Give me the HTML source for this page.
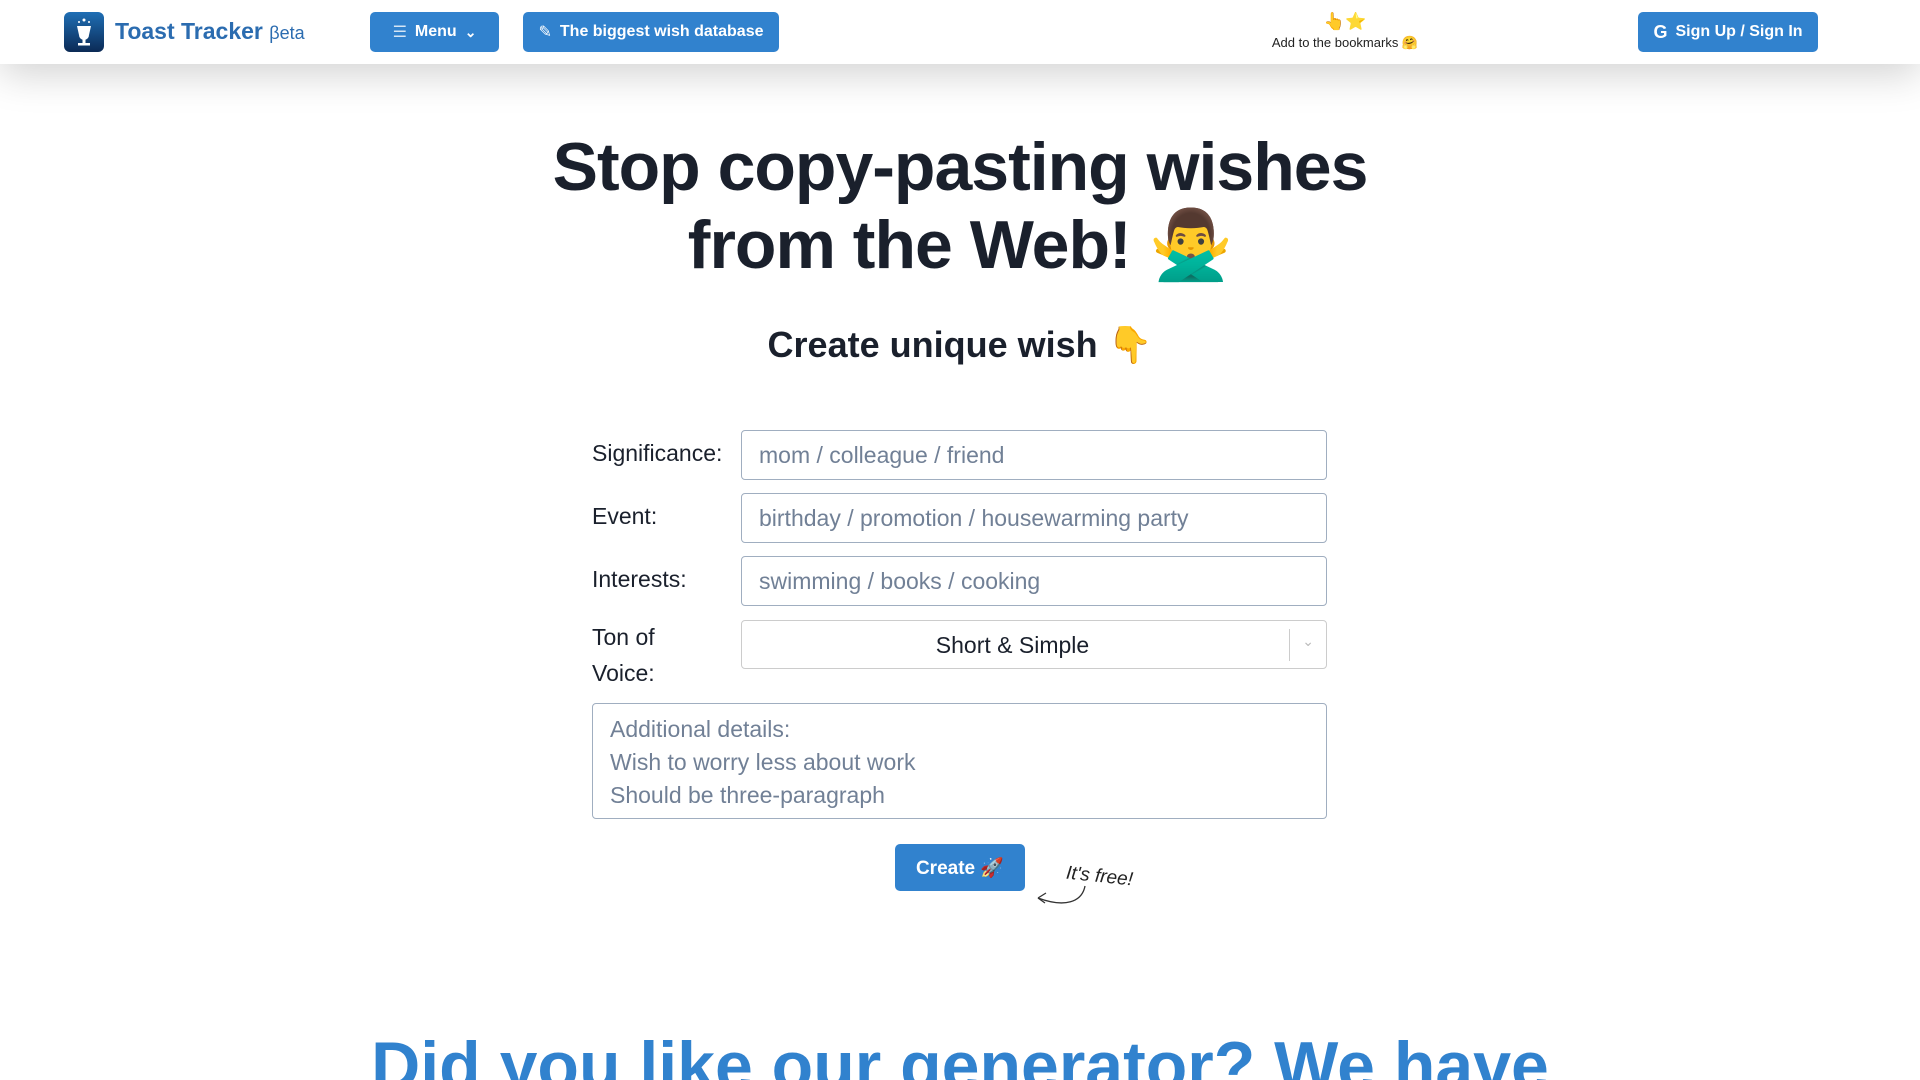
<!DOCTYPE html>
<html><head><meta charset="utf-8"><style>
*{box-sizing:border-box;margin:0;padding:0}
html{width:1920px;height:1080px;overflow:hidden}
body{width:1920px;height:1080px;overflow:hidden;background:#fff;font-family:"Liberation Sans",sans-serif;color:#1a202c;position:relative}
.hdr{position:absolute;left:0;top:0;width:1920px;height:64px;background:#fff;box-shadow:0 10px 40px rgba(0,0,0,.18);z-index:2}
.btn{position:absolute;background:#3182ce;color:#fff;border-radius:5px;font-weight:bold;font-size:16px;display:flex;align-items:center;justify-content:center;gap:8px}
.abs{position:absolute}
.inp{position:absolute;left:741px;width:586px;height:50px;border:1px solid #a0aec0;border-radius:4px;font-size:23px;color:#718096;padding:11px 17px;white-space:nowrap}
.lbl{position:absolute;left:592px;font-size:23px;color:#1a202c}
</style></head><body>
<div class="hdr">
  <div class="abs" style="left:64px;top:12px;width:40px;height:40px;border-radius:6px;background:linear-gradient(#1f6fb5,#0b2a55)">
    <svg width="40" height="40" viewBox="0 0 40 40"><path d="M13 14h14l-2 9a5 5 0 0 1-10 0z" fill="#fff"/><rect x="18.5" y="27" width="3" height="5" fill="#fff"/><rect x="14" y="31" width="12" height="2.5" fill="#fff"/><circle cx="20" cy="8" r="1.5" fill="#fff"/><circle cx="15" cy="10" r="1" fill="#fff"/><circle cx="25" cy="10" r="1" fill="#fff"/></svg>
  </div>
  <div class="abs" style="left:115px;top:18px;font-size:23px;font-weight:bold;color:#2b6cb0;white-space:nowrap">Toast Tracker <span style="font-size:18px;font-weight:normal">βeta</span></div>
  <div class="btn" style="left:370px;top:12px;width:129px;height:40px"><span style="font-weight:normal;opacity:.8">☰</span> Menu <span style="font-size:14px">⌄</span></div>
  <div class="btn" style="left:523px;top:12px;width:256px;height:40px"><span style="font-weight:normal">✎</span> The biggest wish database</div>
  <div class="abs" style="left:1240px;top:12px;width:210px;text-align:center;font-size:13px;color:#222;line-height:20px"><span style="font-size:17px">👆⭐</span><br>Add to the bookmarks 🤗</div>
  <div class="btn" style="left:1638px;top:12px;width:180px;height:40px"><b style="font-size:18px">G</b> Sign Up / Sign In</div>
</div>
<div class="abs" style="left:0;top:128px;width:1920px;text-align:center;font-size:68px;font-weight:bold;line-height:78px;letter-spacing:-1px;color:#1a202c">Stop copy-pasting wishes<br>from the Web! 🙅‍♂️</div>
<div class="abs" style="left:0;top:324px;width:1920px;text-align:center;font-size:36px;font-weight:bold">Create unique wish 👇</div>
<div class="lbl" style="top:440px">Significance:</div>
<div class="inp" style="top:430px">mom / colleague / friend</div>
<div class="lbl" style="top:503px">Event:</div>
<div class="inp" style="top:493px">birthday / promotion / housewarming party</div>
<div class="lbl" style="top:566px">Interests:</div>
<div class="inp" style="top:556px">swimming / books / cooking</div>
<div class="lbl" style="top:619px;line-height:36px">Ton of<br>Voice:</div>
<div class="inp" style="top:620px;height:49px;border-color:#ccc;color:#1a202c;text-align:center;padding-right:60px">Short &amp; Simple
  <div class="abs" style="right:36px;top:8px;width:1px;height:32px;background:#ccc"></div>
  <div class="abs" style="right:12px;top:12px;color:#bbb;font-size:14px">⌄</div></div>
<div class="inp" style="left:592px;width:735px;top:703px;height:116px;line-height:33px;padding-top:9px">Additional details:<br>Wish to worry less about work<br>Should be three-paragraph</div>
<div class="btn" style="left:895px;top:844px;width:130px;height:47px;font-size:19px">Create 🚀</div>
<div class="abs" style="left:1066px;top:866px;font-size:19px;font-style:italic;transform:rotate(6deg);color:#222">It's free!</div>
<svg class="abs" style="left:1030px;top:880px" width="60" height="40"><path d="M55 6 C52 22 35 28 8 18" fill="none" stroke="#333" stroke-width="1.3"/><path d="M8 18 l8 -5 M8 18 l7 5" stroke="#333" stroke-width="1.3" fill="none"/></svg>
<div class="abs" style="left:0;top:1026px;width:1920px;text-align:center;font-size:68px;line-height:80px;font-weight:bold;color:#3182ce;white-space:nowrap">Did you like our generator? We have</div>
</body></html>
